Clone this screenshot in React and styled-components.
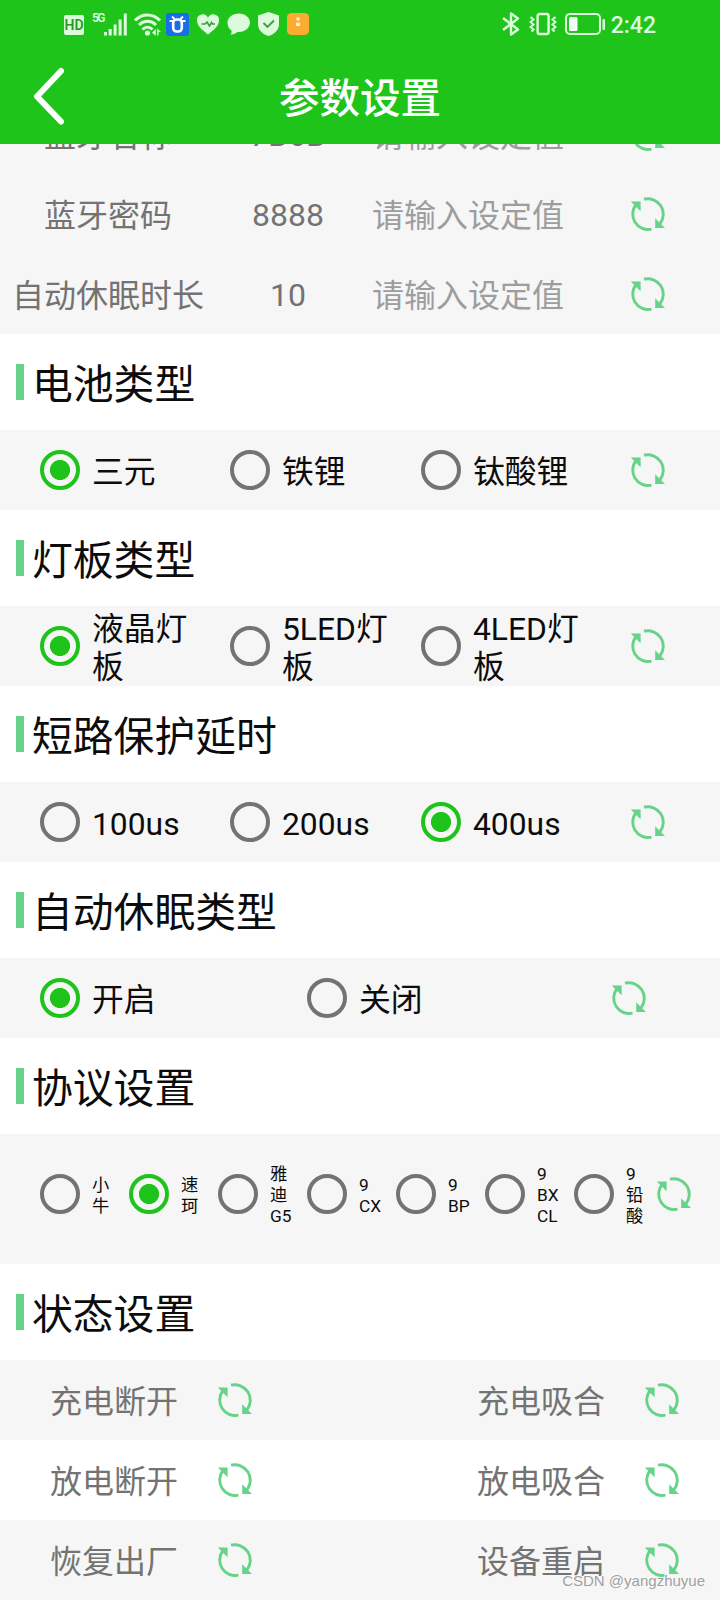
import React from "react";
import styled, { createGlobalStyle, css } from "styled-components";

const theme = {
  green: "#1fc41b",
  softGreen: "#66d388",
  grey: "#737373",
  lightGrey: "#9d9da0",
  rowBackground: "#f6f6f6",
  icon: "#dcfbdc",
};

const GlobalStyle = createGlobalStyle`
  * {
    box-sizing: border-box;
  }
  body {
    margin: 0;
    background: white;
    font-family: Roboto, "Noto Sans CJK SC", sans-serif;
  }
`;

const Screen = styled.div`
  position: relative;
  width: 720px;
  height: 1600px;
  overflow: hidden;
  display: flex;
  flex-direction: column;
`;
const StatusBar = styled.div`
  flex: none;
  height: 48px;
  padding: 0 64px;
  display: flex;
  align-items: center;
  justify-content: space-between;
  background: ${theme.green};
`;
const StatusIcons = styled.div`
  display: flex;
  align-items: center;
  gap: 8px;
`;
const HdBadge = styled.span`
  width: 20px;
  height: 20px;
  margin-top: 2px;
  border-radius: 2px;
  background: ${theme.icon};
  color: #249a24;
  font-size: 14px;
  font-weight: 600;
  line-height: 21px;
  text-align: center;
`;
const Network = styled.div`
  display: flex;
  align-items: flex-start;
  height: 24px;
`;
const NetworkType = styled.span`
  width: 12px;
  color: ${theme.icon};
  font-size: 12px;
  font-weight: 600;
  line-height: 13px;
  letter-spacing: -1.6px;
`;
const Clock = styled.span`
  margin-left: -3px;
  padding-top: 3px;
  color: ${theme.icon};
  font-size: 23px;
  font-weight: 500;
  line-height: 28px;
`;
const Header = styled.header`
  flex: none;
  height: 96px;
  padding: 0 30px;
  display: grid;
  grid-template-columns: 60px 1fr 60px;
  align-items: center;
  background: ${theme.green};
`;
const Title = styled.h1`
  margin: 0;
  padding-top: 6px;
  color: white;
  font-size: 40.5px;
  font-weight: 500;
  line-height: 56px;
  text-align: center;
`;
const Content = styled.main`
  flex: 1;
  min-height: 0;
  overflow: hidden;
  display: flex;
  flex-direction: column;
`;
/* the list is scrolled, so its first row is partly under the header */
const FieldList = styled.div`
  flex: none;
  margin-top: -50px;
  background: ${theme.rowBackground};
`;
const Field = styled.div`
  height: 80px;
  display: grid;
  grid-template-columns: 216px 144px 270px 1fr;
  align-items: center;
  color: ${theme.grey};
  font-size: 32px;
  line-height: 40px;
`;
const FieldText = styled.span`
  padding-top: 4px;
  text-align: center;
  white-space: nowrap;
`;
const FieldValue = styled(FieldText)`
  padding-top: 2px;
`;
const Placeholder = styled.span`
  padding: 4px 0 0 12px;
  color: ${theme.lightGrey};
`;
const SectionTitle = styled.h2`
  flex: none;
  height: 96px;
  margin: 0;
  padding: 0 0 0 16px;
  display: flex;
  align-items: center;
  gap: 8px;
  background: white;
  color: #0c0c0c;
  font-size: 40.8px;
  font-weight: 400;
  line-height: 56px;

  &::before {
    content: "";
    width: 8px;
    height: 36px;
    background: ${theme.softGreen};
  }
`;
const SectionTitleText = styled.span`
  margin-top: 5px;
`;
const Options = styled.div`
  flex: none;
  height: 80px;
  padding-left: 40px;
  display: grid;
  grid-template-columns: ${({ $columns }) => $columns};
  align-items: center;
  background: ${theme.rowBackground};
  ${({ $compact }) =>
    $compact &&
    css`
      height: 130px;
      padding-bottom: 11px;
    `}
`;
const Option = styled.label`
  display: flex;
  align-items: center;
  gap: 12px;
`;
const Radio = styled.span`
  flex: none;
  width: 40px;
  height: 40px;
  border: 4px solid ${({ $checked }) => ($checked ? theme.green : theme.grey)};
  border-radius: 50%;
  background: ${({ $checked }) =>
    $checked
      ? `radial-gradient(circle, ${theme.green} 9.7px, transparent 10.4px)`
      : "transparent"};
`;
const OptionText = styled.span`
  max-width: 122px;
  /* the glyphs hang a little lower than the radio's centre */
  margin: 2px 0 -2px;
  color: #0c0c0c;
  font-size: 31.8px;
  line-height: 38px;
  ${({ $compact }) =>
    $compact &&
    css`
      max-width: 25px;
      font-size: 17.3px;
      line-height: 21px;
    `}
`;
const Actions = styled.div`
  flex: none;
  height: 80px;
  padding: 0 40px 0 50px;
  display: flex;
  align-items: center;
  justify-content: space-between;
  background: ${({ $white }) => ($white ? "white" : theme.rowBackground)};
`;
const Action = styled.div`
  display: flex;
  align-items: center;
  gap: 39px;
  color: ${theme.grey};
  font-size: 32px;
  line-height: 40px;
`;
const ActionText = styled.span`
  padding-top: 3px;
`;
const Watermark = styled.span`
  position: absolute;
  right: 15px;
  bottom: 8px;
  color: #a0a0a0;
  font-family: "Liberation Sans", sans-serif;
  font-size: 15px;
  line-height: 22px;
  text-shadow: -1px -1px 0 rgba(255, 255, 255, 0.8);
`;
const Icon = styled.svg`
  display: block;
  flex: none;
`;
const WifiSvg = styled(Icon)`
  margin: 0 -4px 0 -1px;
`;
const BluetoothSvg = styled(Icon)`
  margin-right: 1px;
`;

const RefreshIcon = () => (
  <Icon width="36" height="36" viewBox="0 0 36 36">
    <g fill="none" stroke={theme.softGreen} strokeWidth="2.9">
      <path d="M14 3.2A15.5 15.5 0 0 1 30 27.8" />
      <path d="M21.5 33.2A15.5 15.5 0 0 1 6 8.5" />
    </g>
    <path d="M.8 5.5h9.8v9.8zM35 32h-9.8v-9.8z" fill={theme.softGreen} />
  </Icon>
);

const BackIcon = () => (
  <Icon width="40" height="60" viewBox="0 0 40 60">
    <path
      d="M31 5L7 30.5L31 55.5"
      fill="none"
      stroke="white"
      strokeWidth="6"
      strokeLinecap="round"
      strokeLinejoin="round"
    />
  </Icon>
);

const SignalIcon = () => (
  <Icon width="23" height="24" viewBox="0 0 23 24" fill={theme.icon}>
    <path d="M0 20h3v3.5H0zM4.700 17h3v6.5h-3zM9.600 12.5h3v11h-3zM14.600 7.500h3v16h-3zM19.800 1.500h3v22h-3z" />
  </Icon>
);

const WifiIcon = () => (
  <WifiSvg width="28" height="24" viewBox="0 0 28 24">
    <g fill="none" stroke={theme.icon} strokeWidth="3">
      <path d="M1 8.5C8 1 19 1 26 8.5" />
      <path d="M5 13c5-5 12-5 17 0" />
      <path d="M8.5 17.5c3-3 7-3 10 0" />
    </g>
    <circle cx="13.5" cy="21" r="2.6" fill={theme.icon} />
    <path
      d="M21.8 17v6.800l-3.800-3zM23.200 16.500L27 20h-2.500v3.500h-1.300z"
      fill={theme.icon}
    />
  </WifiSvg>
);

const CleanerIcon = () => (
  <Icon width="23" height="23" viewBox="0 0 23 23">
    <rect width="23" height="23" rx="3" fill="#176eea" />
    <g fill="none" stroke="white">
      <path
        d="M6 3.5l2.500 2.500M17 3.500L14.500 6M3.500 8H8M15 8h4.500"
        strokeWidth="1.8"
      />
      <rect
        x="7.2"
        y="6.5"
        width="8.6"
        height="12"
        rx="3.5"
        strokeWidth="2.6"
      />
    </g>
  </Icon>
);

const HeartIcon = () => (
  <Icon width="22" height="22" viewBox="0 0 22 22">
    <path
      d="M11 21.5C5 17 0 12.5 0 7.500a5.700 5.700 0 0 1 11-2.500A5.700 5.700 0 0 1 22 7.500c0 5-5 9.500-11 14z"
      fill={theme.icon}
    />
    <path
      d="M4.500 11H8l2-2 2.500 4 2-3.500 1 1.500h2.500"
      fill="none"
      stroke="#3a9f42"
      strokeWidth="1.6"
    />
  </Icon>
);

const BubbleIcon = () => (
  <Icon width="23" height="22" viewBox="0 0 23 22">
    <path
      d="M12 .5c6 0 11 4 11 9s-5 9.500-11 9.500l-1.500-.1C8 21 5.500 21.500 3.500 21.500c1-1 1.300-2.500 1-4C2 16 .5 13 .5 9.500c0-5 5-9 11.500-9z"
      fill={theme.icon}
    />
  </Icon>
);

const ShieldIcon = () => (
  <Icon width="21" height="24" viewBox="0 0 21 24">
    <path
      d="M10.500 0L21 3.500V12c0 6-4.500 10-10.500 12C4.500 22 0 18 0 12V3.500z"
      fill={theme.icon}
    />
    <path
      d="M5.500 11l4 4 6.500-6.500"
      fill="none"
      stroke="#3a9f42"
      strokeWidth="1.8"
    />
  </Icon>
);

const NoticeIcon = () => (
  <Icon width="22" height="22" viewBox="0 0 22 22">
    <rect width="22" height="22" rx="4.5" fill="#fbac30" />
    <path
      d="M9.500 4.500h3v3h-3zM9 9.500h1.200l.8 1.200.8-1.200H13V13H9z"
      fill="#fff3d8"
    />
  </Icon>
);

const BluetoothIcon = () => (
  <BluetoothSvg width="18" height="24" viewBox="0 0 18 24">
    <path
      d="M1 6l15 11.500-7 5V1.500l7 5L1 18"
      fill="none"
      stroke={theme.icon}
      strokeWidth="2.4"
      strokeLinejoin="round"
    />
  </BluetoothSvg>
);

const VibrateIcon = () => (
  <Icon width="28" height="24" viewBox="0 0 28 24">
    <rect
      x="8.6"
      y="2"
      width="11"
      height="20"
      rx="2"
      fill="none"
      stroke={theme.icon}
      strokeWidth="2.4"
    />
    <path
      d="M1.500 5l3 2.500-3 2.500 3 2.500-3 2.500 3 2.500-2 2M26.500 5l-3 2.500 3 2.500-3 2.500 3 2.500-3 2.500 2 2"
      fill="none"
      stroke={theme.icon}
      strokeWidth="2"
    />
  </Icon>
);

const BatteryIcon = () => (
  <Icon width="41" height="22" viewBox="0 0 41 22">
    <rect
      x="1"
      y="1"
      width="34"
      height="20"
      rx="4"
      fill="none"
      stroke={theme.icon}
      strokeWidth="2"
    />
    <rect x="4" y="4" width="8.5" height="14" rx="1.5" fill="#f3fff3" />
    <rect x="37.5" y="6" width="2.5" height="11" rx="1" fill={theme.icon} />
  </Icon>
);

const fields = [
  { label: "蓝牙名称", value: "7B6B" },
  { label: "蓝牙密码", value: "8888" },
  { label: "自动休眠时长", value: "10" },
];

const threeColumns = "190px 191px 209px 1fr";

const sections = [
  {
    title: "电池类型",
    columns: threeColumns,
    options: ["三元", "铁锂", "钛酸锂"],
    checked: 0,
  },
  {
    title: "灯板类型",
    columns: threeColumns,
    options: ["液晶灯板", "5LED灯板", "4LED灯板"],
    checked: 0,
  },
  {
    title: "短路保护延时",
    columns: threeColumns,
    options: ["100us", "200us", "400us"],
    checked: 2,
  },
  {
    title: "自动休眠类型",
    columns: "267px 304px 1fr",
    options: ["开启", "关闭"],
    checked: 0,
  },
  {
    title: "协议设置",
    columns: "repeat(6, 89px) 82px 1fr",
    options: ["小牛", "速珂", "雅迪G5", "9 CX", "9 BP", "9 BX CL", "9 铅酸"],
    checked: 1,
    compact: true,
  },
];

const actions = [
  ["充电断开", "充电吸合"],
  ["放电断开", "放电吸合"],
  ["恢复出厂", "设备重启"],
];

const Heading = ({ children }) => (
  <SectionTitle>
    <SectionTitleText>{children}</SectionTitleText>
  </SectionTitle>
);

const Section = ({ title, columns, options, checked, compact }) => (
  <>
    <Heading>{title}</Heading>
    <Options $columns={columns} $compact={compact}>
      {options.map((option, index) => (
        <Option key={option}>
          <Radio $checked={index === checked} />
          <OptionText $compact={compact}>{option}</OptionText>
        </Option>
      ))}
      <RefreshIcon />
    </Options>
  </>
);

const App = () => (
  <Screen>
    <GlobalStyle />
    <StatusBar>
      <StatusIcons>
        <HdBadge>HD</HdBadge>
        <Network>
          <NetworkType>5G</NetworkType>
          <SignalIcon />
        </Network>
        <WifiIcon />
        <CleanerIcon />
        <HeartIcon />
        <BubbleIcon />
        <ShieldIcon />
        <NoticeIcon />
      </StatusIcons>
      <StatusIcons>
        <BluetoothIcon />
        <VibrateIcon />
        <BatteryIcon />
        <Clock>2:42</Clock>
      </StatusIcons>
    </StatusBar>
    <Header>
      <BackIcon />
      <Title>参数设置</Title>
    </Header>
    <Content>
      <FieldList>
        {fields.map(({ label, value }) => (
          <Field key={label}>
            <FieldText>{label}</FieldText>
            <FieldValue>{value}</FieldValue>
            <Placeholder>请输入设定值</Placeholder>
            <RefreshIcon />
          </Field>
        ))}
      </FieldList>
      {sections.map((section) => (
        <Section key={section.title} {...section} />
      ))}
      <Heading>状态设置</Heading>
      {actions.map(([left, right], index) => (
        <Actions key={left} $white={index === 1}>
          <Action>
            <ActionText>{left}</ActionText>
            <RefreshIcon />
          </Action>
          <Action>
            <ActionText>{right}</ActionText>
            <RefreshIcon />
          </Action>
        </Actions>
      ))}
    </Content>
    <Watermark>CSDN @yangzhuyue</Watermark>
  </Screen>
);

export default App;
